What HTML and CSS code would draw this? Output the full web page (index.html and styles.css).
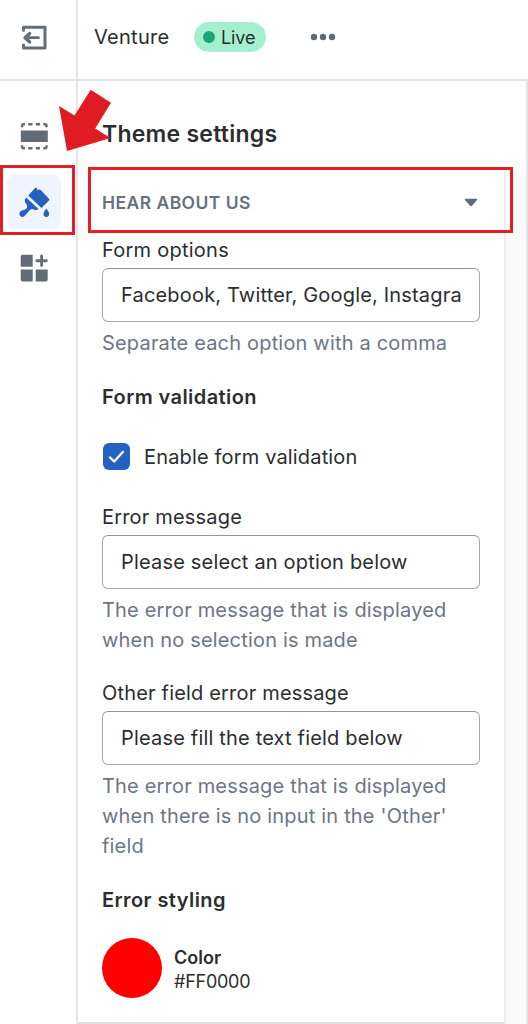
FILE: index.html
```
<!DOCTYPE html>
<html lang="en">
<head>
<meta charset="utf-8">
<title>Theme settings</title>
<link rel="stylesheet" href="styles.css">
</head>
<body>
<div class="editor">
  <header class="topbar">
    <div class="exit">
      <svg width="28" height="28" viewBox="0 0 28 28" fill="none" stroke="#626e7c" stroke-width="3" stroke-linecap="round" stroke-linejoin="round"><path d="M3.5 7.2V4.3H25V25H3.5V22"/><path d="M18.500 14.700H6" stroke-width="2.800"/><path d="M9.700 10.500L5 14.700L9.700 18.900" stroke-width="3.300"/></svg>
    </div>
    <div class="theme-bar">
      <span class="theme-name">Venture</span>
      <span class="badge"><i class="dot"></i><span class="badge-text">Live</span></span>
      <svg class="more" width="26" height="8" viewBox="0 0 26 8" fill="#5f6a78"><circle cx="4" cy="4" r="3.2"/><circle cx="13" cy="4" r="3.2"/><circle cx="22" cy="4" r="3.2"/></svg>
    </div>
  </header>
  <div class="main">
    <nav class="rail">
      <div class="tool">
        <svg width="28" height="28" viewBox="0 0 28 28"><path fill="#626c77" d="M.8 8.500h27v11.500H.8z"/><path d="M2.100 5.200V3.700Q2.100 2.300 3.500 2.300H5M8.300 2.300h4.200M15.800 2.300h4.200M23.300 2.300h1.600Q26.500 2.300 26.500 3.700V5.200M2.100 23.300v1.500Q2.100 26.200 3.500 26.200H5M8.300 26.200h4.200M15.800 26.200h4.200M23.300 26.200h1.600Q26.500 26.200 26.500 24.800v-1.500" fill="none" stroke="#626c77" stroke-width="2.400"/></svg>
      </div>
      <div class="tool tool-active">
        <svg width="32" height="32" viewBox="0 0 32 32" fill="#2362c2"><path d="M10.200 9.500L17.200 2Q18 1.200 18.800 2L19.600 4.400L21 3.500Q22 3.200 22.700 4.100L31 12.800Q31.800 13.700 31 14.500L23.500 21.900Z"/><path d="M8.200 11.500L20.500 22.900Q18.500 24.700 16.300 23.700Q14 22.300 12.200 23.800L6.800 29.700Q4.500 32 2.300 30Q.3 27.700 2.500 25.300Q3.700 24.300 6 23.900Q9.200 23 9.200 20.500Q9.200 18.800 7.600 17.200Q5.700 14.300 8.200 11.500Z"/><path d="M28.300 22.500Q31.200 26.400 31.200 28Q31 30.900 28.300 30.900Q25.600 30.800 25.500 28Q25.500 26.400 28.300 22.500Z"/></svg>
      </div>
      <div class="tool">
        <svg width="28" height="28" viewBox="0 0 28 28" fill="#626c77"><path d="M2.500.7H12.700V12.700H.7V2.700Q.7.700 2.500.7ZM.7 15.500H12.700V27.500H2.500Q.7 27.500 .7 25.500ZM15.700 15.500H27.700V25.500Q27.700 27.500 25.700 27.500H15.700Z"/><path d="M21.600 2V11.500M16.800 6.750H26.400" fill="none" stroke="#626c77" stroke-width="2.800" stroke-linecap="round"/></svg>
      </div>
    </nav>
    <section class="panel">
      <h1 class="title"><span class="t-title">Theme settings</span></h1>
      <div class="settings">
        <div class="content">
          <div class="accordion"><span class="t-acc">HEAR ABOUT US</span>
            <svg width="14" height="9" viewBox="0 0 14 9" fill="#5f6a78"><path d="M1.300.7H12.700Q13.700 1 13 2L8 7.800Q7 8.700 6 7.800L1 2Q.3 1 1.300.7Z"/></svg>
          </div>
          <div class="field">
            <label class="label"><span class="t-options">Form options</span></label>
            <div class="input"><span class="t-face">Facebook, Twitter, Google, Instagra</span></div>
            <p class="help"><span class="t-sep">Separate each option with a comma</span></p>
          </div>
          <h2 class="heading"><span class="t-valid">Form validation</span></h2>
          <div class="check-row">
            <span class="checkbox"><svg width="27" height="27" viewBox="0 0 27 27" fill="none" stroke="#fff" stroke-width="2.300" stroke-linecap="round" stroke-linejoin="round"><path d="M7 14.500L11.200 18.500L20 8.800"/></svg></span>
            <span class="t-enable">Enable form validation</span>
          </div>
          <div class="field field-error">
            <label class="label"><span class="t-error">Error message</span></label>
            <div class="input"><span class="t-select">Please select an option below</span></div>
            <p class="help"><span class="t-displayed">The error message that is displayed</span><br><span class="t-when">when no selection is made</span></p>
          </div>
          <div class="field field-other">
            <label class="label"><span class="t-other">Other field error message</span></label>
            <div class="input"><span class="t-fill">Please fill the text field below</span></div>
            <p class="help"><span class="t-displayed">The error message that is displayed</span><br><span class="t-input">when there is no input in the 'Other'</span><br><span class="t-field">field</span></p>
          </div>
          <h2 class="heading"><span class="t-styling">Error styling</span></h2>
          <div class="color-row">
            <span class="swatch"></span>
            <div class="color-text"><b class="t-color">Color</b><span class="t-hex">#FF0000</span></div>
          </div>
        </div>
        <div class="gutter"></div>
      </div>
    </section>
  </div>
  <div class="mark mark-tool"></div>
  <div class="mark mark-section"></div>
  <svg class="arrow" width="56" height="66" viewBox="57 88 56 66"><path fill="#df1c24" d="M67 151L59 106L74.500 115.500L90.700 89.700L111 102.700L95.200 128.500L110.500 138Z"/></svg>
</div>
</body>
</html>
```
FILE: styles.css
```
* { box-sizing: border-box; }
body {
  margin: 0;
  background: #fff;
  color: #2b2d30;
  font-family: Inter, "Noto Sans", sans-serif;
  font-size: 20px;
  line-height: 30px;
  letter-spacing: 0.18px;
}
h1, h2, p { margin: 0; font-size: 20px; font-weight: 600; }
p { font-weight: 400; }
svg { display: block; flex: none; }
span, b { white-space: nowrap; }
.editor { position: relative; display: flex; flex-direction: column; width: 528px; height: 1024px; overflow: hidden; }
.topbar { display: flex; height: 81px; border-bottom: 2px solid #e6e6e6; }
.exit { width: 78px; border-right: 2px solid #e4e5e7; padding: 23px 0 0 20px; }
.theme-bar { display: flex; align-items: center; padding: 0 0 5px 16px; }
.theme-name { width: 75px; letter-spacing: 0.28px; }
.badge { display: flex; align-items: center; gap: 6px; width: 72px; height: 30px; margin-left: 25px; padding-left: 9px; border-radius: 15px; background: #a4efd0; font-size: 18px; }
.badge-text { padding-top: 2px; letter-spacing: -0.1px; }
.dot { width: 12px; height: 12px; border-radius: 50%; background: #17a77b; }
.more { margin-left: 44px; }
.main { display: flex; flex: 1; min-height: 0; }
.rail { width: 78px; border-right: 2px solid #e4e5e7; padding: 28px 0 0 7px; display: flex; flex-direction: column; gap: 12px; }
.tool { width: 54px; height: 54px; display: flex; align-items: center; justify-content: center; border-radius: 8px; }
.tool-active { background: #eff4fe; }
.panel { flex: 1; display: flex; flex-direction: column; border-right: 2px solid #e4e5e9; }
.title { height: 88px; padding: 38px 0 0 24px; font-size: 23px; letter-spacing: 0.25px; }
.settings { flex: 1; display: flex; }
.content { width: 426px; padding: 0 24px; border-bottom: 2px solid #dedfe3; }
.gutter { flex: 1; background: #fafafa; border-left: 2px solid #ededee; }
.accordion { display: flex; align-items: center; justify-content: space-between; height: 66px; padding-right: 2px; color: #67717e; font-size: 17.5px; font-weight: 600; letter-spacing: 0.45px; }
.t-acc { padding-top: 2px; }
.label { display: block; height: 33px; }
.input { height: 54px; padding: 0 18px; display: flex; align-items: center; border: 1.5px solid #a4a9b0; border-top-color: #8f959c; border-radius: 6px; }
.help { padding-top: 7px; color: #6d7683; line-height: 29.8px; }
.t-options { letter-spacing: 0.25px; }
.heading { margin-top: 23px; letter-spacing: 0.42px; }
.check-row { display: flex; align-items: center; gap: 14px; height: 30px; margin-top: 30px; padding-left: 1px; }
.t-enable { letter-spacing: 0.16px; }
.checkbox { width: 27px; height: 27px; border-radius: 6px; background: #2462c1; }
.field-error { margin-top: 30px; }
.field-other { margin-top: 23px; }
.color-row { display: flex; align-items: center; gap: 12px; margin-top: 23px; }
.swatch { width: 60px; height: 60px; border-radius: 50%; background: #ff0000; }
.color-text { display: flex; flex-direction: column; padding-top: 4px; font-size: 18px; line-height: 24px; letter-spacing: 0; }
.color-text b { font-weight: 600; }
.t-hex { letter-spacing: -0.25px; }
.mark { position: absolute; border: 3px solid #e11f29; }
.mark-tool { left: 0; top: 165px; width: 75px; height: 70px; }
.mark-section { left: 88px; top: 167px; width: 425px; height: 66px; }
.arrow { position: absolute; left: 57px; top: 88px; }
```
